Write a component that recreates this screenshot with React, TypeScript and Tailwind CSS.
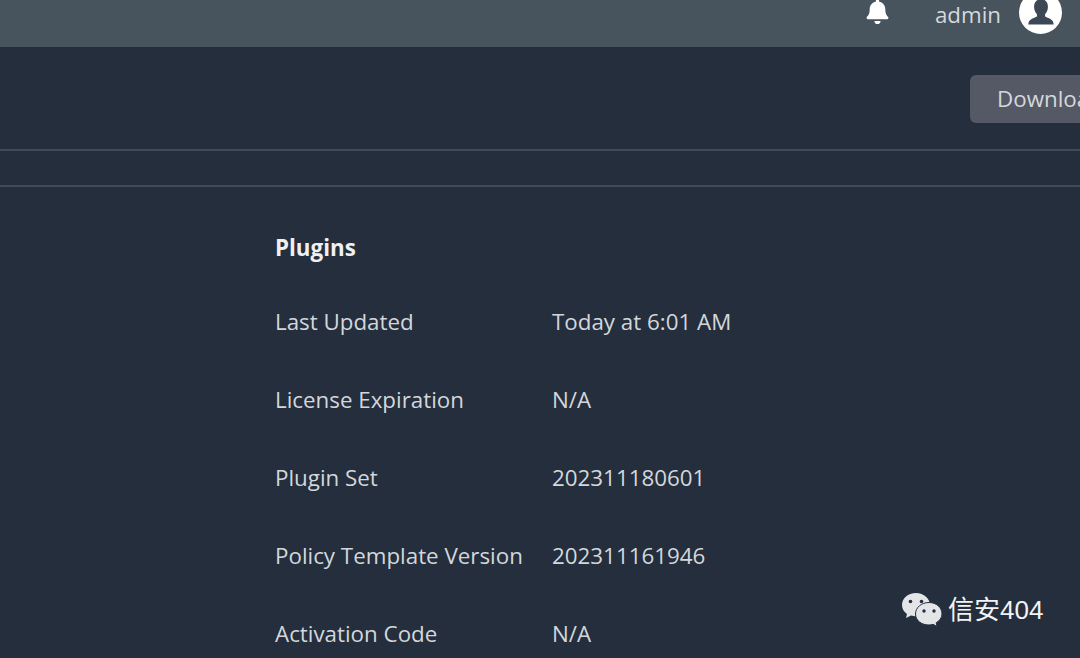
import { FaBell } from 'react-icons/fa';

const rows = [
    { label: 'Last Updated', value: 'Today at 6:01 AM' },
    { label: 'License Expiration', value: 'N/A' },
    { label: 'Plugin Set', value: '202311180601' },
    { label: 'Policy Template Version', value: '202311161946' },
    { label: 'Activation Code', value: 'N/A' },
];

function WeChatIcon() {
    return (
        <svg width="42" height="36" viewBox="0 0 42 36" className="shrink-0">
            <path d="M15 1C7 1 1 6 1 13c0 4 2 7 5 9l-1 4 5-2.500c2 .5 3.500 .8 5 .8 8 0 14-5.300 14-11.300S23 1 15 1z" fill="#e4e5e7" />
            <circle cx="9.500" cy="9.500" r="1.800" fill="#242e3d" />
            <circle cx="20.500" cy="9.500" r="1.800" fill="#242e3d" />
            <path d="M28 10.500c-7.500 0-13.500 5-13.500 11.500S20.500 33 28 33c1.500 0 2.800-.2 4-.7l4 2.200-.8-3.700c3.500-2 5.800-5.200 5.800-8.800 0-6.500-5.500-11.500-13-11.500z" fill="#e4e5e7" stroke="#242e3d" strokeWidth="1" />
            <circle cx="23" cy="19" r="1.700" fill="#242e3d" />
            <circle cx="33" cy="19" r="1.700" fill="#242e3d" />
        </svg>
    );
}

export default function App() {
    return (
        <div className="relative h-[658px] w-[1080px] overflow-hidden bg-[#242e3d] font-['Open_Sans',sans-serif] text-[#d3d7db]">
            <header className="flex h-[47px] items-start justify-end bg-[#47535d] pr-[18px]">
                <FaBell size={25} color="#ffffff" className="mr-[45px] -mt-[1px]" />
                <span className="mr-[18px] text-[22.350px] leading-[30px] text-[#d5d8dc]">admin</span>
                <div className="-mt-[9px] flex h-[43px] w-[43px] items-center justify-center rounded-full bg-white">
                    <svg width="30" height="30" viewBox="0 0 26 26">
                        <path d="M13 1c-4 0-6 3-6 6.500 0 2.500 1 5 2.500 6.500v2C7 17.500 2 18 2 23h22c0-5-5-5.500-7.500-7v-2c1.500-1.500 2.500-4 2.500-6.500C19 4 17 1 13 1z" fill="#3d4855" />
                    </svg>
                </div>
            </header>

            <div className="flex h-[104px] items-start justify-end border-b-2 border-[#414c5a] pt-[28px]">
                <button className="h-[48px] w-[110px] overflow-hidden rounded-l-md bg-[#555965] pl-[27px] text-left text-[22.350px] whitespace-nowrap text-[#d5d8dc]">
                    Download
                </button>
            </div>

            <div className="h-[36px] border-b-2 border-[#414c5a]" />

            <main className="pl-[275px] pt-[46px]">
                <h2 className="h-[30px] text-[22.350px] leading-[30px] font-bold text-[#eef0f2]">Plugins</h2>
                <div className="mt-[44px] flex flex-col gap-[48px]">
                    {rows.map((row) => (
                        <div key={row.label} className="flex h-[30px] items-center text-[22.350px] leading-[30px]">
                            <span className="w-[277px] shrink-0">{row.label}</span>
                            <span>{row.value}</span>
                        </div>
                    ))}
                </div>
            </main>

            <div className="absolute left-[901px] top-[591px] flex items-center gap-[5px]">
                <WeChatIcon />
                <span className="pt-[1px] font-['Liberation_Sans','Noto_Sans_CJK_SC',sans-serif] text-[26px] leading-[36px] text-[#f2f3f4]">信安404</span>
            </div>
        </div>
    );
}
